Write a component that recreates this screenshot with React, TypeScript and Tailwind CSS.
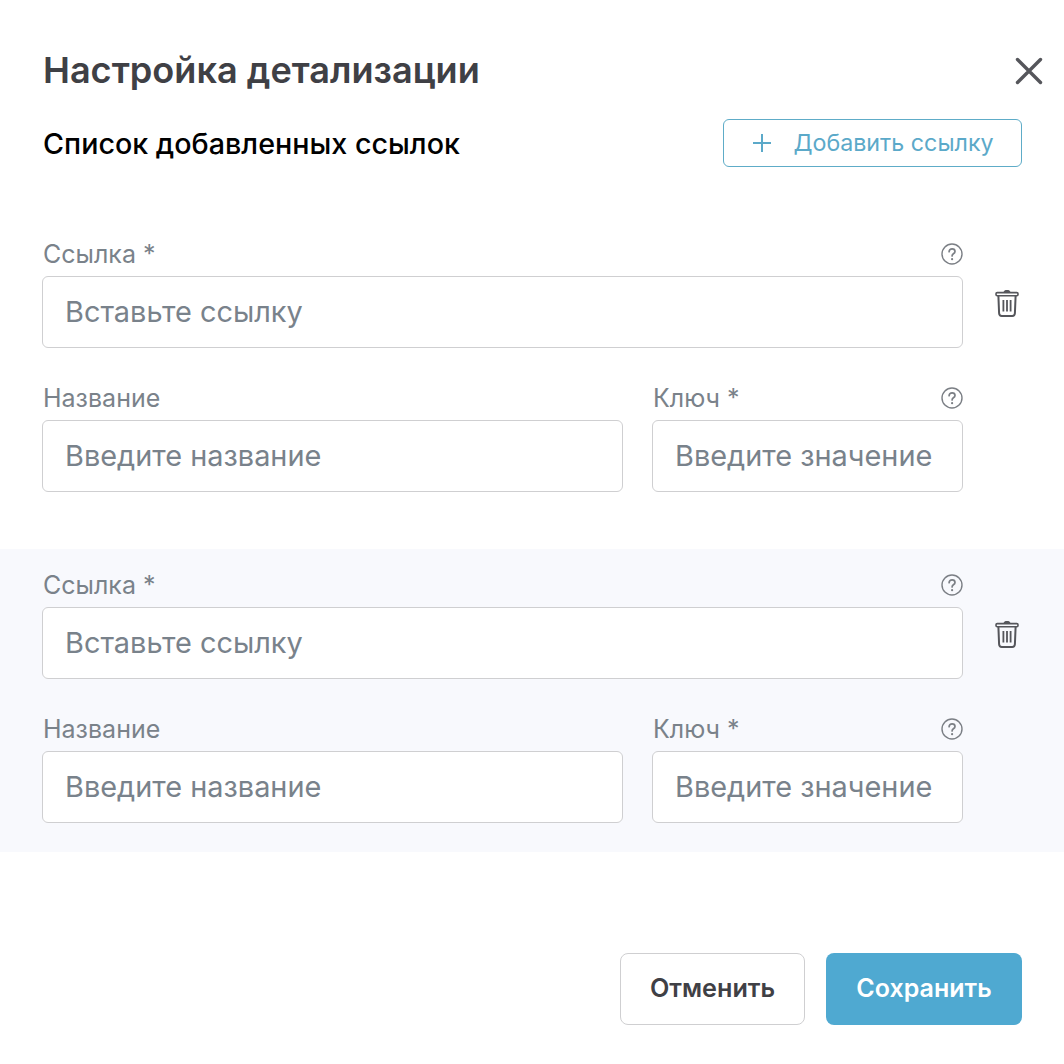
import React from "react";

const HelpIcon = () => (
  <svg width="22" height="22" viewBox="0 0 22 22" fill="none" className="text-[#7b7f85]">
    <circle cx="11" cy="11" r="10" stroke="currentColor" strokeWidth="1.4" />
    <path
      d="M8.1 8.7c0-1.7 1.3-2.8 3-2.8 1.6 0 2.9 1 2.9 2.5 0 1.2-.7 1.8-1.6 2.4-.9.6-1.3 1.1-1.3 2.2"
      stroke="currentColor"
      strokeWidth="1.7"
      strokeLinecap="round"
    />
    <circle cx="11.1" cy="16.2" r="1.1" fill="currentColor" />
  </svg>
);

const TrashIcon = () => (
  <svg width="24" height="28" viewBox="0 0 24 28" fill="none" className="text-[#55565b]">
    <rect x="1" y="3.6" width="22" height="3.2" rx="1.2" stroke="currentColor" strokeWidth="1.6" />
    <path d="M8.5 3.5C8.8 1.6 10 1 12 1s3.2.6 3.5 2.5z" fill="currentColor" />
    <path
      d="M3.4 7l.7 17.2c.1 1.6 1 2.7 2.6 2.7h10.6c1.6 0 2.5-1.1 2.6-2.7L20.6 7"
      stroke="currentColor"
      strokeWidth="2"
    />
    <path d="M8.4 11v11.5M12 11v11.5M15.6 11v11.5" stroke="currentColor" strokeWidth="1.8" />
  </svg>
);

const Field = ({
  label,
  placeholder,
  help,
  className,
}: {
  label: string;
  placeholder: string;
  help?: boolean;
  className?: string;
}) => (
  <div className={className}>
    <div className="flex h-[22px] items-center justify-between pl-px text-[25px] text-[#7a828a]">
      <span className="pt-[2px]">{label}</span>
      {help && <HelpIcon />}
    </div>
    <input
      placeholder={placeholder}
      className="mt-[11px] block h-[72px] w-full rounded-[6px] border border-[#cfcfd1] bg-white px-[22px] pb-[2px] text-[28.9px] outline-none placeholder:text-[#79828b]"
    />
  </div>
);

const LinkBlock = ({ className }: { className?: string }) => (
  <div className={`flex px-[42px] pb-[29px] ${className ?? ""}`}>
    <div className="w-[921px]">
      <Field label="Ссылка *" placeholder="Вставьте ссылку" help />
      <div className="mt-[39px] flex gap-[29px]">
        <Field label="Название" placeholder="Введите название" className="w-[581px]" />
        <Field label="Ключ *" placeholder="Введите значение" help className="w-[311px]" />
      </div>
    </div>
    <div className="flex flex-1 justify-end pr-[3px] pt-[46px]">
      <TrashIcon />
    </div>
  </div>
);

const App: React.FC = () => {
  return (
    <div className="h-[1064px] w-[1064px] bg-white font-['Inter',sans-serif]">
      <div className="flex h-[108px] items-end justify-between pb-[16px] pl-[43px] pr-[21px]">
        <h1 className="text-[36.1px] leading-[44px] font-semibold text-[#3f4045]">Настройка детализации</h1>
        <button className="mb-[7px] text-[#55565b]">
          <svg width="28" height="28" viewBox="0 0 28 28" fill="none">
            <path d="M2.5 2.5l23 23M25.5 2.5l-23 23" stroke="currentColor" strokeWidth="3.4" strokeLinecap="round" />
          </svg>
        </button>
      </div>

      <div className="mt-[11px] flex items-center justify-between pl-[43px] pr-[42px]">
        <h2 className="pt-[1px] text-[28.7px] font-medium text-black">Список добавленных ссылок</h2>
        <button className="flex h-[48px] w-[299px] items-center justify-center gap-[21px] rounded-[6px] border border-[#5eacc8] pl-[1px] text-[23.25px] text-[#5ba9c9]">
          <svg width="20" height="20" viewBox="0 0 20 20" fill="none">
            <path d="M10 1v18M1 10h18" stroke="currentColor" strokeWidth="2" />
          </svg>
          Добавить ссылку
        </button>
      </div>

      <LinkBlock className="mt-[51px] pt-[25px]" />
      <LinkBlock className="mt-[28px] bg-[#f8f9fd] pt-[25px]" />

      <div className="mt-[101px] flex justify-end gap-[21px] pr-[42px]">
        <button className="h-[72px] w-[185px] rounded-[8px] border border-[#cfcfd1] bg-white text-[25.2px] font-semibold text-[#3f4045]">
          Отменить
        </button>
        <button className="h-[72px] w-[196px] rounded-[8px] bg-[#4fa9d1] text-[25px] font-semibold text-white">
          Сохранить
        </button>
      </div>
    </div>
  );
};

export default App;
